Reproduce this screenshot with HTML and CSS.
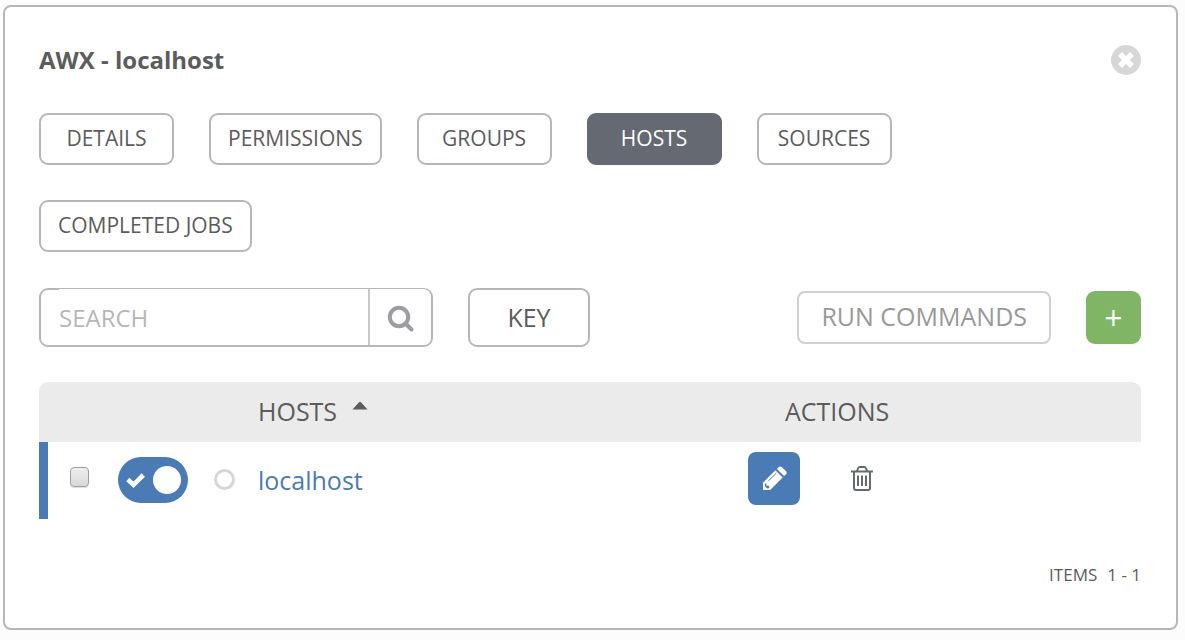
FILE: index.html
```html
<!DOCTYPE html>
<html lang="en">
<head>
<meta charset="utf-8">
<title>AWX - localhost</title>
<link rel="stylesheet" href="styles.css">
</head>
<body>
<main class="panel">
  <header class="panel-header">
    <h1 class="panel-title">AWX - localhost</h1>
    <button class="close" type="button" aria-label="Close">
      <svg width="30" height="30" viewBox="0 0 30 30" aria-hidden="true">
        <circle cx="15" cy="15" r="15" fill="#d7d7d7"/>
        <path d="M9 9L21 21M21 9L9 21" stroke="#fff" stroke-width="5.400"/>
      </svg>
    </button>
  </header>

  <nav class="tabs">
    <button class="tab" type="button">DETAILS</button>
    <button class="tab" type="button">PERMISSIONS</button>
    <button class="tab" type="button">GROUPS</button>
    <button class="tab tab-active" type="button">HOSTS</button>
    <button class="tab" type="button">SOURCES</button>
    <button class="tab" type="button">COMPLETED JOBS</button>
  </nav>

  <div class="toolbar">
    <form class="search">
      <input class="search-input" type="text" placeholder="SEARCH" aria-label="Search">
      <button class="search-button" type="button" aria-label="Run search">
        <svg width="28" height="28" viewBox="0 0 28 28" aria-hidden="true">
          <circle cx="12" cy="12" r="9.200" fill="none" stroke="#9b9da2" stroke-width="4"/>
          <path d="M18.500 18.500L24.500 24.500" stroke="#9b9da2" stroke-width="4" stroke-linecap="round"/>
        </svg>
      </button>
    </form>
    <button class="key" type="button">KEY</button>
    <button class="run" type="button">RUN COMMANDS</button>
    <button class="add" type="button" aria-label="Add host">+</button>
  </div>

  <table class="hosts">
    <colgroup>
      <col class="col-select"><col class="col-state"><col class="col-name"><col class="col-actions">
    </colgroup>
    <thead>
      <tr>
        <th></th>
        <th></th>
        <th>HOSTS <svg class="sort" width="16" height="9" viewBox="0 0 16 9" aria-hidden="true"><path d="M.5 8.500L7 1.200Q8 .2 9 1.200L15.500 8.500Z" fill="#5c5c5c"/></svg></th>
        <th class="actions-heading">ACTIONS</th>
      </tr>
    </thead>
    <tbody>
      <tr>
        <td class="select-cell"><input class="check" type="checkbox" aria-label="Select localhost"></td>
        <td class="state-cell">
          <div class="state">
            <button class="toggle" type="button" role="switch" aria-checked="true" aria-label="Host enabled">
              <svg width="20" height="16" viewBox="0 0 20 16" aria-hidden="true"><path d="M1.800 7.500L7.500 12.800L17.300 3" fill="none" stroke="#fff" stroke-width="4.600"/></svg>
              <span class="knob"></span>
            </button>
            <span class="status"></span>
          </div>
        </td>
        <td class="name-cell"><a class="host-link" href="#">localhost</a></td>
        <td>
          <div class="actions">
            <button class="edit" type="button" aria-label="Edit host">
              <svg width="25" height="25" viewBox="0 0 26 26" aria-hidden="true">
                <path d="M1 25V17.500L14 4.500L21.500 12L8.500 25Z" fill="#fff"/>
                <path d="M15.500 3L17.500 1Q19 -.2 20.500 1L25 5.500Q26.200 7 25 8.500L23 10.500Z" fill="#fff"/>
                <path d="M6.500 15.500L15 7.300" stroke="#4b7bb4" stroke-width="1"/>
                <path d="M3 18.500L4.500 18V20.500H7.500V23L5.500 23.500L3 21Z" fill="#4b7bb4"/>
              </svg>
            </button>
            <button class="delete" type="button" aria-label="Delete host">
              <svg width="22" height="25" viewBox="0 0 22 25" fill="none" stroke="#646972" stroke-width="2" aria-hidden="true">
                <path d="M0 5.500H22M6 5L7.200 2Q7.500 1 8.800 1H13.200Q14.500 1 14.800 2L16 5M3 5.500V21.500Q3 24 5 24H17Q19 24 19 21.500V5.500M7 9.500V20M11 9.500V20M15 9.500V20"/>
              </svg>
            </button>
          </div>
        </td>
      </tr>
    </tbody>
  </table>

  <footer class="summary"><span>ITEMS</span><span>1 - 1</span></footer>
</main>
</body>
</html>
```
FILE: styles.css
```css
* {
  box-sizing: border-box;
}

body {
  margin: 5px 7px 10px 3px;
  background: #fcfcfc;
  color: #5c5c5c;
  font-family: "Open Sans", "Noto Sans", sans-serif;
  font-size: 25px;
}

button,
input {
  margin: 0;
  padding: 0;
  border: 0;
  background: none;
  color: inherit;
  font: inherit;
}

svg {
  display: block;
}

.panel {
  padding: 34px 35px 41px 34px;
  border: 2px solid #b7b7b7;
  border-radius: 8px;
  background: #fff;
}

.panel-header {
  display: flex;
  align-items: center;
  justify-content: space-between;
  height: 38px;
}

.panel-title {
  margin: 0;
  padding-bottom: 2px;
  font-size: 24px;
  font-weight: 700;
}

.tabs {
  display: flex;
  flex-wrap: wrap;
  gap: 35px;
  margin-top: 34px;
  padding-right: 35px;
}

.tab {
  min-width: 135px;
  height: 52px;
  padding: 0 17px 2px;
  border: 2px solid #b7b7b7;
  border-radius: 9px;
  font-size: 21px;
}

.tab-active {
  border-color: #646972;
  background: #646972;
  color: #fff;
}

.toolbar {
  display: flex;
  align-items: center;
  margin-top: 36px;
}

.search {
  display: flex;
  width: 394px;
  height: 59px;
  padding-left: 18px;
  border: 2px solid #b7b7b7;
  border-radius: 9px;
}

.search-input {
  flex: 1;
  min-width: 0;
  margin-top: -1px;
  background: #fff;
  font-size: 24px;
  outline: 0;
}

.search-input::placeholder {
  color: #b7b7b7;
  opacity: 1;
}

.search-button {
  display: grid;
  place-items: center;
  width: 63px;
  margin-top: -1px;
  padding-top: 4px;
  border-left: 2px solid #c8c8c8;
  border-radius: 0 8px 8px 0;
  background: #fff;
}

.key {
  width: 122px;
  height: 59px;
  margin-left: 35px;
  padding-bottom: 2px;
  border: 2px solid #b7b7b7;
  border-radius: 9px;
}

.run {
  height: 53px;
  margin-left: auto;
  padding: 0 22px 4px;
  border: 2px solid #d0d0d0;
  border-radius: 8px;
  color: #999;
}

.add {
  width: 55px;
  height: 53px;
  margin-left: 35px;
  border-radius: 9px;
  background: #7fb564;
  color: #fff;
  font-size: 32px;
  line-height: 53px;
}

.hosts {
  width: 100%;
  margin-top: 35px;
  border-spacing: 0;
  table-layout: fixed;
}

.col-select {
  width: 79px;
}

.col-state {
  width: 140px;
}

.col-actions {
  width: 393px;
}

.hosts th {
  height: 60px;
  padding: 0 0 2px;
  background: #ebebeb;
  font-weight: 400;
  text-align: left;
}

.hosts th:first-child {
  border-top-left-radius: 9px;
}

.hosts th:last-child {
  border-top-right-radius: 9px;
}

.hosts .actions-heading {
  padding-left: 37px;
}

.sort {
  display: inline-block;
  margin-left: 8px;
  vertical-align: 11px;
}

.hosts td {
  height: 77px;
  padding: 0;
}

.hosts .select-cell {
  padding: 0 0 8px 22px;
  border-left: 9px solid #4b7bb4;
}

.hosts .name-cell,
.hosts .state-cell {
  padding-bottom: 2px;
}

.check {
  display: block;
  width: 19px;
  height: 20px;
  border: 1px solid #a0a0a0;
  border-radius: 4px;
  background: linear-gradient(#eee, #d8d8d8);
  box-shadow: 0 1px 1px #ddd;
  appearance: none;
}

.state {
  display: flex;
  align-items: center;
  gap: 26px;
}

.toggle {
  display: flex;
  align-items: center;
  justify-content: space-between;
  width: 70px;
  height: 46px;
  padding: 0 7px 0 8px;
  border-radius: 23px;
  background: #4b7bb4;
}

.knob {
  width: 28px;
  height: 28px;
  border-radius: 50%;
  background: #fff;
}

.status {
  width: 21px;
  height: 21px;
  border: 3px solid #d7d7d7;
  border-radius: 50%;
}

.host-link {
  color: #4b7bb4;
  text-decoration: none;
}

.actions {
  display: flex;
  align-items: center;
  gap: 51px;
  padding-bottom: 4px;
}

.edit {
  display: grid;
  place-items: center;
  width: 52px;
  height: 53px;
  border-radius: 8px;
  background: #4b7bb4;
}

.summary {
  display: flex;
  justify-content: flex-end;
  gap: 10px;
  margin-top: 44px;
  font-size: 17px;
  line-height: 24px;
}
```
